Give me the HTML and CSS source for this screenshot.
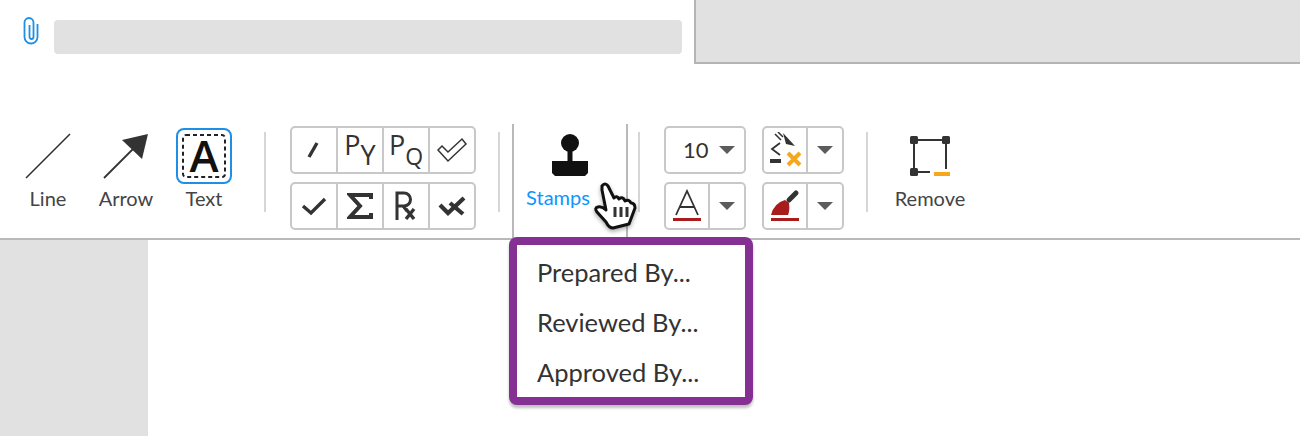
FILE: index.html
```html
<!DOCTYPE html>
<html lang="en">
<head>
    <meta charset="UTF-8">
    <meta name="viewport" content="width=device-width, initial-scale=1.0">
    <title>Annotation Toolbar</title>
    <link rel="stylesheet" href="styles.css">
</head>
<body>
    <div class="tabs">
        <div class="tab-active">
            <svg class="clip" width="20" height="30" viewBox="0 0 20 30"><path d="M16.500 7V20a6.500 6.500 0 0 1-13 0V5.500a4.500 4.500 0 0 1 9 0V20a2 2 0 0 1-4 0V8" fill="none" stroke="#1f8fe5" stroke-width="1.800"/></svg>
            <div class="title-bar"></div>
        </div>
        <div class="tab-other"></div>
    </div>

    <div class="toolbar">
        <div class="tool">
            <svg width="46" height="46" viewBox="0 0 46 46"><path d="M1 45L45 1" stroke="#333" stroke-width="1.600"/></svg>
            <span>Line</span>
        </div>
        <div class="tool">
            <svg width="46" height="46" viewBox="0 0 46 46"><path d="M1 45L32 14" stroke="#333" stroke-width="1.800"/><path d="M45 1L19 7L39 26Z" fill="#333"/></svg>
            <span>Arrow</span>
        </div>
        <div class="tool">
            <svg class="text-box" width="56" height="56" viewBox="0 0 56 56">
                <rect x="1" y="1" width="54" height="54" rx="7" fill="#fff" stroke="#1f8fe5" stroke-width="2"/>
                <rect x="7" y="7" width="42" height="42" rx="3" fill="none" stroke="#222" stroke-width="2" stroke-dasharray="4 3"/>
                <text class="text-a" x="28" y="44" text-anchor="middle">A</text>
            </svg>
            <span>Text</span>
        </div>

        <div class="sep sep-first"></div>

        <div class="marks">
            <div class="btn-row">
                <div class="cell"><svg width="20" height="20" viewBox="0 0 20 20"><path d="M5 17L13 3" stroke="#333" stroke-width="3.400"/></svg></div>
                <div class="cell letters"><span class="high">P</span><span class="low">Y</span></div>
                <div class="cell letters"><span class="high">P</span><span class="low low-q">Q</span></div>
                <div class="cell"><svg width="32" height="28" viewBox="0 0 32 28"><path d="M2 14L6 10L12 16L26 3L30 8L12 25Z" fill="none" stroke="#333" stroke-width="1.500"/></svg></div>
            </div>
            <div class="btn-row">
                <div class="cell"><svg width="26" height="20" viewBox="0 0 26 20"><path d="M2 10L10 17L24 3" fill="none" stroke="#333" stroke-width="3.400"/></svg></div>
                <div class="cell"><svg width="26" height="28" viewBox="0 0 26 28"><path d="M24 7V3H3L13 14L3 25H24V21" fill="none" stroke="#333" stroke-width="4"/></svg></div>
                <div class="cell"><svg width="26" height="32" viewBox="0 0 26 32"><path d="M4 30V3H11A6.500 6.500 0 0 1 11 16H4M10 16L14 21" fill="none" stroke="#333" stroke-width="3"/><path d="M13 19L21 29M21 19L13 29" stroke="#333" stroke-width="3.400"/></svg></div>
                <div class="cell"><svg width="30" height="24" viewBox="0 0 30 24"><path d="M3 11L11 19L27 4" fill="none" stroke="#333" stroke-width="4.200"/><path d="M13 9L26 20" stroke="#333" stroke-width="4.200"/></svg></div>
            </div>
        </div>

        <div class="sep sep-second"></div>

        <div class="stamps">
            <svg width="38" height="44" viewBox="0 0 38 44"><circle cx="19" cy="10" r="9" fill="#111"/><rect x="16.500" y="16" width="5" height="14" fill="#111"/><path d="M1 28H37V40L34 43H4L1 40Z" fill="#111"/></svg>
            <span>Stamps</span>
        </div>

        <div class="sep sep-third"></div>

        <div class="format">
            <div class="btn-row">
                <div class="split">
                    <div class="size">10</div>
                    <div class="caret-cell"><i class="caret"></i></div>
                </div>
                <div class="split">
                    <div class="split-main"><svg width="36" height="36" viewBox="0 0 36 36"><path d="M8 2L14 8M11 0L16 5" stroke="#333" stroke-width="1.500"/><path d="M16 1L28 14L19 12Z" fill="#333"/><path d="M13 11L5 17L13 23" fill="none" stroke="#333" stroke-width="1.800"/><rect x="3" y="27" width="11" height="4" fill="#333"/><path d="M21 21L33 33M33 21L21 33" stroke="#f5a81c" stroke-width="4"/></svg></div>
                    <div class="caret-cell"><i class="caret"></i></div>
                </div>
            </div>
            <div class="btn-row">
                <div class="split">
                    <div class="split-main"><svg width="30" height="34" viewBox="0 0 30 34"><path d="M4 26L15 2L26 26M8 18H22" fill="none" stroke="#333" stroke-width="1.800"/><rect x="1" y="29" width="28" height="3" fill="#a81c1c"/></svg></div>
                    <div class="caret-cell"><i class="caret"></i></div>
                </div>
                <div class="split">
                    <div class="split-main"><svg width="30" height="34" viewBox="0 0 30 34"><path d="M19 11L26 4" stroke="#333" stroke-width="5" stroke-linecap="round"/><path d="M15 11L19 14Q20 22 18 26H1Q4 14 15 11Z" fill="#a81c1c"/><rect x="1" y="29" width="28" height="3" fill="#a81c1c"/></svg></div>
                    <div class="caret-cell"><i class="caret"></i></div>
                </div>
            </div>
        </div>

        <div class="sep sep-fourth"></div>

        <div class="tool tool-remove">
            <svg width="46" height="46" viewBox="0 0 46 46"><path d="M7 7H39V36M7 7V39H23" fill="none" stroke="#333" stroke-width="2"/><rect x="3" y="3" width="8" height="8" rx="1.500" fill="#333"/><rect x="35" y="3" width="8" height="8" rx="1.500" fill="#333"/><rect x="3" y="35" width="8" height="8" rx="1.500" fill="#333"/><rect x="27" y="39" width="16" height="4" fill="#f5a81c"/></svg>
            <span>Remove</span>
        </div>
    </div>

    <div class="below">
        <div class="gutter"></div>
        <div class="menu">
            <div class="menu-item">Prepared By...</div>
            <div class="menu-item">Reviewed By...</div>
            <div class="menu-item">Approved By...</div>
        </div>
    </div>

    <!-- mouse pointer over the stamps button -->
    <svg class="pointer" width="48" height="54" viewBox="0 0 48 54"><path d="M11 7Q14 3 17 7L23 19Q26 16 28 20Q32 17 34 22Q38 20 40 24Q44 24 44 29L38 45L22 49Q18 49 15 43L6 33Q3 29 7 28Q11 27 15 31L11 11Z" fill="#fff" stroke="#111" stroke-width="3" stroke-linejoin="round"/><path d="M24 28V38M30 28V38M36 28V38" stroke="#333" stroke-width="3"/></svg>
</body>
</html>
```

FILE: styles.css
```css
html, body {
    margin: 0;
    padding: 0;
}
body {
    font-family: Lato, "Open Sans", sans-serif;
    color: #333;
    background-color: #fff;
    height: 436px;
    overflow: hidden;
    position: relative;
}
.tabs {
    display: flex;
    height: 64px;
}
.tab-active {
    width: 694px;
    display: flex;
    align-items: flex-start;
    flex-shrink: 0;
}
.clip {
    margin: 17px 0 0 21px;
}
.title-bar {
    width: 628px;
    height: 34px;
    margin: 20px 0 0 13px;
    background-color: #e1e1e1;
    border-radius: 4px;
}
.tab-other {
    flex: 1;
    background-color: #e1e1e1;
    border-left: 2px solid #b4b4b4;
    border-bottom: 2px solid #b4b4b4;
}
.toolbar {
    height: 174px;
    border-bottom: 2px solid #b9b9b9;
    display: flex;
    align-items: flex-start;
    padding-left: 9px;
}
.tool {
    width: 78px;
    margin-top: 69px;
    display: flex;
    flex-direction: column;
    align-items: center;
    font-size: 20px;
    color: #444;
}
.tool span {
    margin-top: 8px;
    line-height: 22px;
}
.text-box {
    margin: -5px 0;
}
.text-a {
    font-family: "Open Sans", sans-serif;
    font-size: 44px;
    font-weight: 600;
    fill: #111;
}
.sep {
    width: 2px;
    height: 80px;
    margin-top: 68px;
    background-color: #d6d6d6;
    flex-shrink: 0;
}
.sep-first {
    margin-left: 21px;
}
.sep-second {
    margin-left: 22px;
}
.sep-third {
    margin-left: 10px;
}
.sep-fourth {
    margin-left: 22px;
}
.marks {
    margin: 62px 0 0 24px;
    display: flex;
    flex-direction: column;
    gap: 8px;
}
.btn-row {
    display: flex;
    gap: 16px;
}
.marks .btn-row {
    width: 186px;
    height: 48px;
    box-sizing: border-box;
    border: 2px solid #c8c8c8;
    border-radius: 5px;
    gap: 0;
}
.cell {
    flex: 1;
    display: flex;
    align-items: center;
    justify-content: center;
    border-left: 2px solid #c8c8c8;
}
.cell:first-child {
    border-left: none;
}
.letters {
    font-family: "Open Sans", sans-serif;
    font-size: 27px;
    font-weight: 500;
    line-height: 30px;
    align-items: flex-start;
}
.high {
    margin-top: 2px;
}
.low {
    margin-top: 12px;
}
.low-q {
    font-size: 23px;
    margin-top: 13px;
}
.stamps {
    width: 112px;
    height: 114px;
    margin: 60px 0 0 12px;
    border-left: 2px solid #b9b9b9;
    border-right: 2px solid #b9b9b9;
    display: flex;
    flex-direction: column;
    align-items: center;
    color: #0a96ff;
    font-size: 20px;
    flex-shrink: 0;
}
.stamps svg {
    margin-top: 9px;
}
.stamps span {
    margin: 8px 0 0 -24px;
    line-height: 24px;
}
.format {
    margin: 62px 0 0 24px;
    display: flex;
    flex-direction: column;
    gap: 8px;
}
.split {
    width: 82px;
    height: 48px;
    box-sizing: border-box;
    border: 2px solid #c8c8c8;
    border-radius: 5px;
    display: flex;
}
.split-main {
    flex: 1;
    display: flex;
    align-items: center;
    justify-content: center;
    border-right: 2px solid #c8c8c8;
}
.size {
    flex: 1;
    font-size: 22px;
    line-height: 44px;
    padding-left: 17px;
}
.caret-cell {
    width: 34px;
    display: flex;
    align-items: center;
    justify-content: center;
    flex-shrink: 0;
}
.caret {
    width: 0;
    height: 0;
    border-left: 8px solid transparent;
    border-right: 8px solid transparent;
    border-top: 8px solid #5c5c5c;
}
.tool-remove {
    margin: 69px 0 0 23px;
}
.below {
    display: flex;
    height: 196px;
}
.gutter {
    width: 148px;
    background-color: #e1e1e1;
}
.menu {
    width: 244px;
    height: 168px;
    box-sizing: border-box;
    margin: -3px 0 0 361px;
    border: 8px solid #853093;
    border-radius: 8px;
    background-color: #fff;
    box-shadow: 0 3px 3px rgba(0, 0, 0, 0.25);
    padding: 2px 0 0 20px;
    position: relative;
}
.menu-item {
    font-size: 25.500px;
    line-height: 50px;
    color: #333;
}
.pointer {
    position: absolute;
    left: 591px;
    top: 179px;
    filter: drop-shadow(0 2px 2px rgba(0, 0, 0, 0.35));
}
```
